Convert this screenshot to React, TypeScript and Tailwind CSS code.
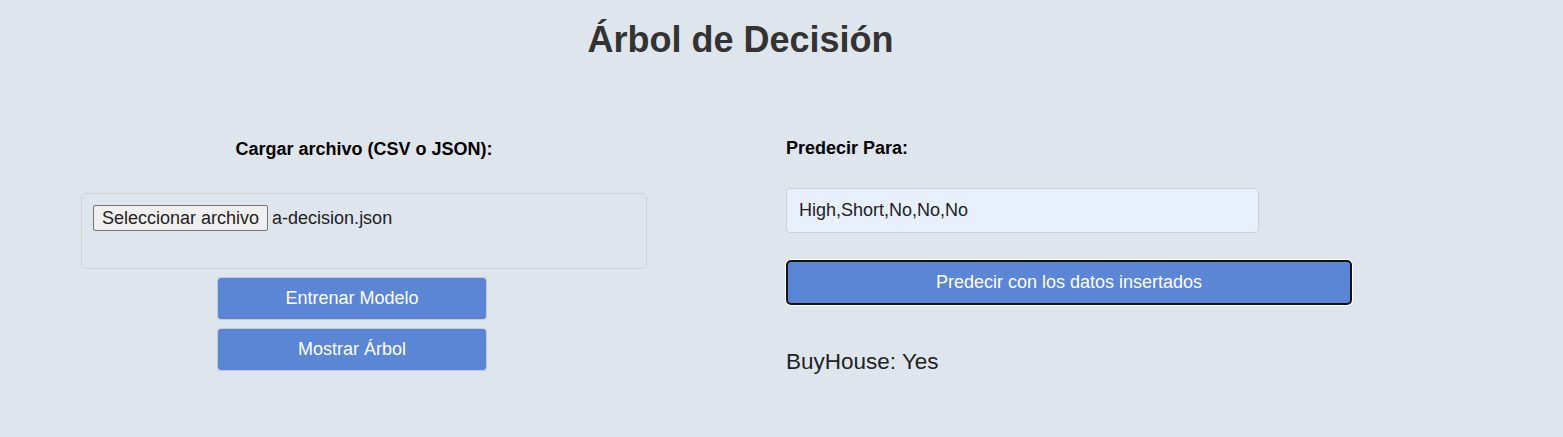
export default function App() {
  return (
    <div className="min-h-screen w-full bg-[#dfe5ed] font-['Liberation_Sans',Arial,sans-serif] text-[#111]">
      <div className="w-[1481px]">
        <h1 className="pt-[19px] text-center text-[36px] font-bold leading-[41px] text-[#333]">
          Árbol de Decisión
        </h1>

        <div className="mt-[79px] flex">
          {/* carga y entrenamiento */}
          <div className="ml-[81px] flex w-[566px] flex-col">
            <label className="text-center text-[18px] font-bold leading-[21px] text-black">
              Cargar archivo (CSV o JSON):
            </label>
            <div className="mt-[33px] flex h-[76px] items-start rounded-[5px] border border-[#cdd1d6] pl-[11px] pt-[11px]">
              <span className="flex h-[26px] items-center rounded-[2px] border border-[#767676] bg-[#efefef] px-[8px] text-[18px] leading-[21px] text-[#222]">
                Seleccionar archivo
              </span>
              <span className="ml-[4px] flex h-[26px] items-center text-[18px] leading-[21px] text-[#222]">
                a-decision.json
              </span>
            </div>
            <div className="ml-[136px] mt-[8px] flex w-[270px] flex-col gap-[8px]">
              <button className="h-[43px] rounded-[4px] border border-[#c4cad3] bg-[#5b85d5] text-[18px] text-white">
                Entrenar Modelo
              </button>
              <button className="h-[43px] rounded-[4px] border border-[#c4cad3] bg-[#5b85d5] text-[18px] text-white">
                Mostrar Árbol
              </button>
            </div>
          </div>

          {/* prediccion */}
          <div className="ml-[139px] flex w-[566px] flex-col">
            <label className="-mt-[1px] text-[18px] font-bold leading-[21px] text-black">
              Predecir Para:
            </label>
            <div className="mt-[29px] flex h-[45px] w-[473px] items-center rounded-[4px] border border-[#cdd1d6] bg-[#e8f0fe] pl-[12px] text-[18px] text-[#222]">
              High,Short,No,No,No
            </div>
            <button className="mt-[27px] h-[45px] w-full rounded-[5px] border-2 border-[#141414] bg-[#5b85d5] text-[18px] text-white shadow-[0_0_0_1px_#ffffff]">
              Predecir con los datos insertados
            </button>
            <p className="mt-[44px] text-[22.5px] leading-[25px] text-[#222]">BuyHouse: Yes</p>
          </div>
        </div>
      </div>
    </div>
  );
}
